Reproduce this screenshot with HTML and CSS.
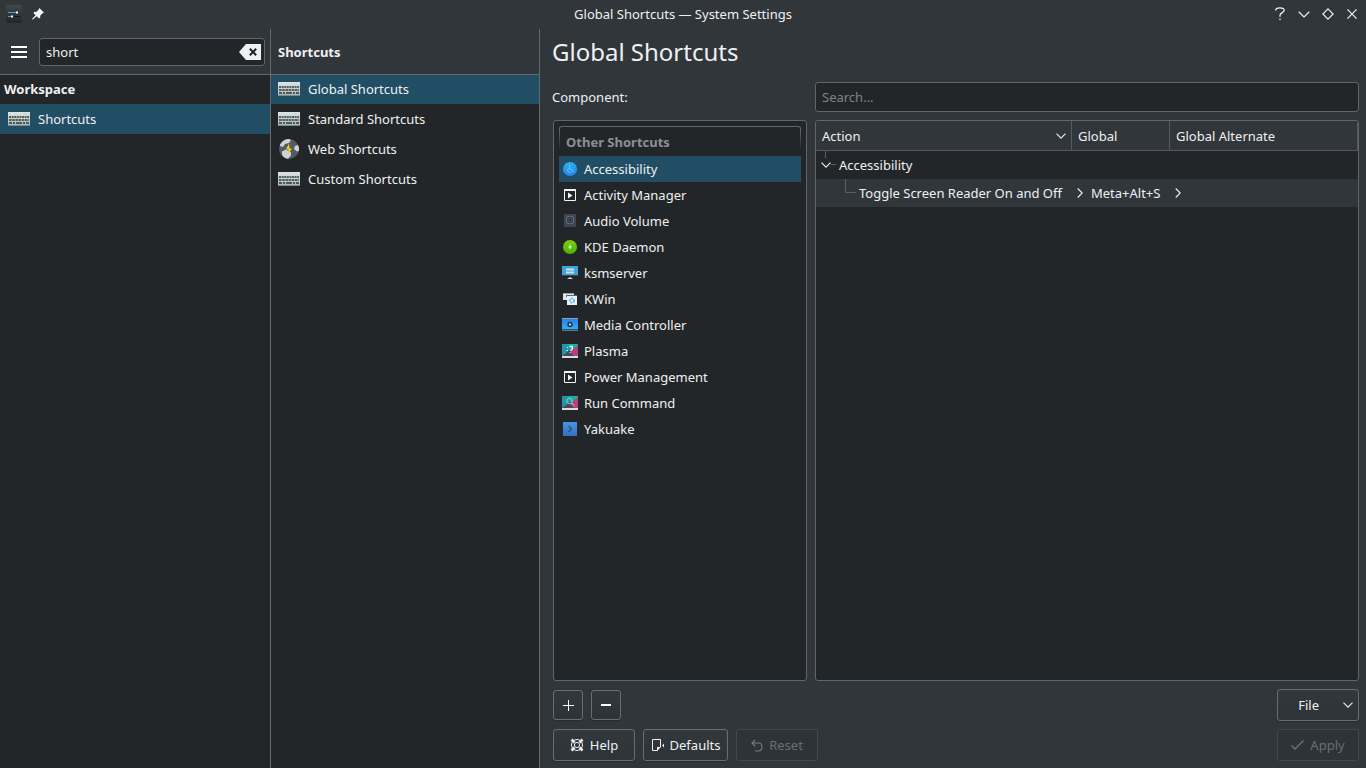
FILE: index.html
```html
<!DOCTYPE html>
<html lang="en">
<head>
<meta charset="utf-8">
<title>Global Shortcuts — System Settings</title>
<link rel="stylesheet" href="styles.css">
</head>
<body>
<svg class="defs" width="0" height="0">
  <defs>
    <linearGradient id="g-acc" x1="0" y1="0" x2="0" y2="1"><stop offset="0" stop-color="#2cb0f5"/><stop offset="1" stop-color="#2585ee"/></linearGradient>
    <linearGradient id="g-green" x1="0" y1="0" x2="0" y2="1"><stop offset="0" stop-color="#7ad10a"/><stop offset="1" stop-color="#4ab00c"/></linearGradient>
    <linearGradient id="g-blue" x1="0" y1="0" x2="0" y2="1"><stop offset="0" stop-color="#2a7df0"/><stop offset="1" stop-color="#22b6fa"/></linearGradient>
    <linearGradient id="g-yak" x1="0" y1="0" x2="0" y2="1"><stop offset="0" stop-color="#4896dc"/><stop offset="1" stop-color="#356fc0"/></linearGradient>
    <linearGradient id="g-key" x1="0" y1="0" x2="0" y2="1"><stop offset="0" stop-color="#dfe5e5"/><stop offset="1" stop-color="#aab3b3"/></linearGradient>
    <linearGradient id="g-app" x1="0" y1="0" x2="0" y2="1"><stop offset="0" stop-color="#42474c"/><stop offset="1" stop-color="#222529"/></linearGradient>
    <symbol id="keyboard" viewBox="0 0 22 22">
      <rect y="4" width="22" height="14" fill="url(#g-key)"/>
      <rect y="17" width="22" height="1" fill="#7c8989"/>
      <rect x="16" y="5" width="3" height="1" fill="#a5e6da"/>
      <path d="M1 9h20" stroke="#52615f" stroke-width="2" stroke-dasharray="2 .6"/>
      <path d="M1 12h20" stroke="#52615f" stroke-width="2" stroke-dasharray="2.600 .6"/>
      <path d="M1 15h3M5 15h2M8 15h6M15 15h2M18 15h3" stroke="#4c5b59" stroke-width="2"/>
    </symbol>
    <symbol id="chev-down" viewBox="0 0 10 6"><path d="M.5.7L5 5.200 9.500.7" fill="none" stroke="#eff0f1" stroke-width="1.100"/></symbol>
    <symbol id="chev-right" viewBox="0 0 6 10"><path d="M.7.5L5.200 5 .7 9.500" fill="none" stroke="#eff0f1" stroke-width="1.100"/></symbol>
    <symbol id="run" viewBox="0 0 16 16"><path d="M2.500 3v10.500h11V3" fill="none" stroke="#f2f3f3"/><path d="M2 2h12v2H2zM6 5.500l4.500 3L6 11.500z" fill="#f2f3f3"/></symbol>
    <symbol id="desktop" viewBox="0 0 16 16">
      <path d="M0 1h16L0 14z" fill="#2494a8"/><path d="M5 1h11v2l-6 5z" fill="#1fae98"/>
      <path d="M16 2v11H5l4-5z" fill="#b5407f"/><path d="M0 13l7-5 5 5z" fill="#454b52"/>
      <rect y="13" width="16" height="2" fill="#d9dcde"/>
    </symbol>
  </defs>
</svg>

<header class="titlebar">
  <svg class="app-icon" width="18" height="18" viewBox="0 0 18 18"><rect x="1" y="0" width="16" height="18" fill="url(#g-app)"/><path d="M3 7.500h8" stroke="#4aa0cb"/><path d="M3 11.500h4" stroke="#4aa0cb"/><path d="M9 11.500h6" stroke="#111418"/><rect x="11" y="6.500" width="2" height="2" fill="#fff"/><rect x="6" y="10.500" width="2" height="2" fill="#fff"/></svg>
  <svg class="pin" width="12" height="12" viewBox="0 0 12 12"><path d="M7.200 0L12 4.500 10.500 5.300 8.200 7.700 8.200 10 6.800 10.300 4.600 8.200 1 11.500 0 11.300.5 10.400 3.600 7.200 1.600 5.200 2 3.800 4.300 3.900 6.700 1.600z" fill="#f5f6f6"/></svg>
  <span class="window-title">Global Shortcuts — System Settings</span>
  <div class="window-controls">
    <svg width="10" height="14" viewBox="0 0 10 14"><path d="M.6 3.500C.6 1.700 2 .8 4.800.8s4.400.8 4.400 2.500c0 2.200-4.200 2.500-4.200 5v1.500M5 11.600v1.600" fill="none" stroke="#eff0f1" stroke-width="1.200"/></svg>
    <svg width="12" height="7" viewBox="0 0 12 7"><path d="M.7.8L6 6 11.300.8" fill="none" stroke="#eff0f1" stroke-width="1.200"/></svg>
    <svg width="12" height="12" viewBox="0 0 12 12"><path d="M6 .9L11.100 6 6 11.100.9 6z" fill="none" stroke="#eff0f1" stroke-width="1.200"/></svg>
    <svg width="10" height="10" viewBox="0 0 10 10"><path d="M.4.400l9.200 9.200M9.600.4L.4 9.600" stroke="#eff0f1" stroke-width="1.200"/></svg>
  </div>
</header>

<div class="body">
  <aside class="categories">
    <div class="side-head">
      <svg width="16" height="12" viewBox="0 0 16 12"><path d="M0 1h16M0 6h16M0 11h16" stroke="#fff" stroke-width="2"/></svg>
      <div class="field filter">short
        <svg width="22" height="16" viewBox="0 0 22 16"><path d="M7 0h15v16H7L0 8z" fill="#eff0f1"/><path d="M10.800 4.800l6.400 6.400M17.200 4.800l-6.400 6.400" stroke="#232629" stroke-width="2"/></svg>
      </div>
    </div>
    <div class="row first bold">Workspace</div>
    <div class="row item selected"><svg width="22" height="22"><use href="#keyboard"/></svg>Shortcuts</div>
  </aside>
  <aside class="modules">
    <div class="side-head bold">Shortcuts</div>
    <div class="row first item selected"><svg width="22" height="22"><use href="#keyboard"/></svg>Global Shortcuts</div>
    <div class="row item"><svg width="22" height="22"><use href="#keyboard"/></svg>Standard Shortcuts</div>
    <div class="row item"><svg width="22" height="22" viewBox="0 0 22 22"><circle cx="11" cy="11" r="10" fill="#535c64"/><path d="M2 6.500C4 3 7 1 11 1l2 1-2 3-4 1-2 3-3-1zM17 8l3-1c1 2 1.300 4 .8 6L19 13.500 16 11zM4 13.500l4-2 5 3v3l-3 3.300c-4-.3-6-3.300-6-5z" fill="#cfd1d3"/><path d="M11 5.500L8 11.500h2.500L10 16.500 14 10.500h-2.500z" fill="#f8d024"/></svg>Web Shortcuts</div>
    <div class="row item"><svg width="22" height="22"><use href="#keyboard"/></svg>Custom Shortcuts</div>
  </aside>

  <main class="content">
    <h1>Global Shortcuts</h1>
    <div class="search-row">
      <span class="label">Component:</span>
      <div class="field search">Search...</div>
    </div>
    <div class="panes">
      <section class="pane components">
        <div class="group-title">Other Shortcuts</div>
        <div class="comp selected"><svg width="16" height="16" viewBox="0 0 16 16"><circle cx="8" cy="8" r="7" fill="url(#g-acc)"/><path d="M7.500 4v4.500H10l1.300 2.500M6.500 7.300a2.300 2.300 0 1 0 2.800 3.700" fill="none" stroke="#78c6fa" stroke-width=".9"/></svg>Accessibility</div>
        <div class="comp"><svg width="16" height="16"><use href="#run"/></svg>Activity Manager</div>
        <div class="comp"><svg width="16" height="16" viewBox="0 0 16 16"><rect x="2" y="1" width="12" height="13" fill="#3c4651"/><circle cx="8" cy="7" r="4" fill="#343d49" stroke="#66707c"/><circle cx="8" cy="7" r="1.700" fill="#252d37" stroke="#56616c" stroke-width=".6"/></svg>Audio Volume</div>
        <div class="comp"><svg width="16" height="16" viewBox="0 0 16 16"><circle cx="8" cy="8" r="7" fill="url(#g-green)"/><path d="M8.500 4.500L6.200 8.700h1.500L7.500 11.500l2.400-4.200H8.500z" fill="#e5f7d4"/></svg>KDE Daemon</div>
        <div class="comp"><svg width="16" height="16" viewBox="0 0 16 16"><rect y="1" width="16" height="9" fill="#3fa4dc"/><rect y="10" width="16" height="1" fill="#39454e"/><path d="M4 4.500h8M4 7.500h8" stroke="#c5dfec" stroke-width="2"/><path d="M5 14l3-2 3 2z" fill="#d8dadb"/></svg>ksmserver</div>
        <div class="comp"><svg width="16" height="16" viewBox="0 0 16 16"><path d="M1 2h11v7H1z" fill="#dfe7ea"/><path d="M1 2h11v1H1z" fill="#8b9fa8"/><path d="M4 4h11v2H4z" fill="#5a6873"/><path d="M5 5h10v9H5z" fill="#e7f2f7"/><circle cx="10" cy="9.500" r="2.200" fill="none" stroke="#58b5e8" stroke-width="1.600" stroke-dasharray="2 .8"/></svg>KWin</div>
        <div class="comp"><svg width="16" height="16" viewBox="0 0 16 16"><rect y="1" width="16" height="13" fill="#8fa8b8"/><rect y="2" width="16" height="10" fill="url(#g-blue)"/><rect y="12" width="16" height="1.500" fill="#354c5e"/><circle cx="8" cy="7.500" r="2.700" fill="#23384c"/><circle cx="8" cy="7.500" r="1.100" fill="#e4e9ec"/></svg>Media Controller</div>
        <div class="comp"><svg width="16" height="16" viewBox="0 0 16 16"><use href="#desktop"/><path d="M7.500 3.500h2.800v2.300L8.500 8" fill="none" stroke="#f2f5f5" stroke-width="1.300"/><path d="M5 4h1v1H5zM4.500 7h1.500v1H4.500zM7.500 9h1v1h-1z" fill="#f2f5f5"/></svg>Plasma</div>
        <div class="comp"><svg width="16" height="16"><use href="#run"/></svg>Power Management</div>
        <div class="comp"><svg width="16" height="16" viewBox="0 0 16 16"><use href="#desktop"/><circle cx="7.500" cy="6" r="2.700" fill="none" stroke="#85d3cc"/><path d="M9.500 8l2.500 2.500" stroke="#ddd"/></svg>Run Command</div>
        <div class="comp"><svg width="16" height="16" viewBox="0 0 16 16"><rect x="1" y="1" width="14" height="14" fill="url(#g-yak)"/><path d="M6.500 5l3 3-3 3" fill="none" stroke="#234c85" stroke-width="1.200"/></svg>Yakuake</div>
      </section>
      <section class="pane tree">
        <div class="thead">
          <div class="th action">Action<svg width="10" height="6"><use href="#chev-down"/></svg></div>
          <div class="th global">Global</div>
          <div class="th alternate">Global Alternate</div>
        </div>
        <div class="trow parent">
          <svg width="20" height="28" viewBox="0 0 20 28"><path d="M9.500 0v7M15 13.500h5" stroke="#5a5f63"/><path d="M5.500 11.700L10 16.200 14.500 11.700" fill="none" stroke="#eff0f1" stroke-width="1.100"/></svg>
          <span>Accessibility</span>
        </div>
        <div class="trow child">
          <svg width="11" height="28" viewBox="0 0 11 28"><path d="M.5 0v13.500H11" fill="none" stroke="#5a5f63"/></svg>
          <span class="name">Toggle Screen Reader On and Off</span>
          <svg width="6" height="10"><use href="#chev-right"/></svg>
          <span class="keys">Meta+Alt+S</span>
          <svg width="6" height="10"><use href="#chev-right"/></svg>
        </div>
      </section>
    </div>
    <div class="tools">
      <div class="btn square"><svg width="12" height="12" viewBox="0 0 12 12"><path d="M0 6.500h11M5.500 1v11" stroke="#fff"/></svg></div>
      <div class="btn square"><svg width="12" height="12" viewBox="0 0 12 12"><path d="M1 6h10" stroke="#fff" stroke-width="2"/></svg></div>
      <div class="btn file"><span>File</span><svg width="10" height="6"><use href="#chev-down"/></svg></div>
    </div>
    <div class="actions">
      <div class="btn help"><svg width="14" height="14" viewBox="0 0 14 14"><path d="M1.500 1.500l3 3M12.500 1.500l-3 3M1.500 12.500l3-3M12.500 12.500l-3-3" stroke="#eff0f1" stroke-width="2.600"/><circle cx="7" cy="7" r="5.500" fill="none" stroke="#eff0f1"/><circle cx="7" cy="7" r="2.600" fill="none" stroke="#eff0f1"/></svg>Help</div>
      <div class="btn defaults"><svg width="14" height="14" viewBox="0 0 14 14"><path d="M7 12.500H1.500v-11h8V9" fill="none" stroke="#eff0f1"/><path d="M6 13V9h4zM13 5.500v4L11 7.500z" fill="#eff0f1"/></svg>Defaults</div>
      <div class="btn reset disabled"><svg width="12" height="13" viewBox="0 0 12 13"><path d="M4.300.7L1 4l3.300 3.300M1 4h6.500C10 4 11 5.700 11 8s-1.500 4-4 4H4" fill="none" stroke="#787d81" stroke-width="1.100"/></svg>Reset</div>
      <div class="btn apply disabled"><svg width="13" height="10" viewBox="0 0 13 10"><path d="M.5 5.500L4 9 12.500.5" fill="none" stroke="#787d81" stroke-width="1.100"/></svg>Apply</div>
    </div>
  </main>
</div>
</body>
</html>
```

FILE: styles.css
```css
* { box-sizing: border-box; }
html, body { margin: 0; height: 100%; }
body {
  width: 1366px;
  height: 768px;
  overflow: hidden;
  display: flex;
  flex-direction: column;
  background: #31363b;
  color: #eff0f1;
  font: 13px/18px "Noto Sans", sans-serif;
  white-space: nowrap;
}
svg { display: block; flex: none; }
.defs { position: absolute; }
.bold { font-weight: 700; }

.titlebar {
  height: 29px;
  flex: none;
  display: flex;
  align-items: center;
  padding: 0 9px 1px 5px;
}
.pin { margin-left: 9px; }
.window-title { flex: 1; text-align: center; padding-left: 47px; }
.window-controls { display: flex; align-items: center; gap: 12px; }
.window-controls svg:first-child { margin-right: 1px; }
.window-controls svg:last-child { margin-left: 1px; }

.body { flex: 1; display: flex; min-height: 0; }
.categories, .modules {
  background: #232629;
  border-right: 1px solid #66696c;
}
.categories { width: 271px; }
.modules { width: 269px; }
.side-head {
  height: 46px;
  background: #31363b;
  border-bottom: 1px solid #66696c;
  display: flex;
  align-items: center;
}
.categories .side-head { padding: 0 5px 0 11px; gap: 12px; }
.modules .side-head { padding-left: 7px; }
.field {
  background: #232629;
  border: 1px solid #616569;
  border-radius: 3px;
  display: flex;
  align-items: center;
}
.filter { flex: 1; height: 28px; padding: 0 3px 0 6px; justify-content: space-between; }
.row { height: 30px; display: flex; align-items: center; }
.row.first { height: 29px; padding: 0 0 1px 4px; }
.row.item { padding-left: 8px; gap: 8px; }
.modules .row.item { padding-left: 7px; }
.selected { background: #224e65; }

.content { flex: 1; padding: 0 7px 0 13px; }
h1 {
  margin: 0 0 0 -1px;
  height: 53px;
  font-size: 24px;
  font-weight: 400;
  line-height: 46px;
}
.search-row { display: flex; height: 30px; align-items: center; }
.label { width: 263px; margin-left: -1px; }
.search { flex: 1; height: 30px; padding-left: 6px; color: #7f8386; }
.panes { display: flex; gap: 8px; margin-top: 8px; height: 561px; }
.pane { background: #232629; border: 1px solid #616569; border-radius: 3px; }
.components { width: 254px; padding: 5px; }
.group-title {
  height: 30px;
  padding: 6px 0 0 6px;
  line-height: 18px;
  font-weight: 700;
  color: #8d9092;
  border: 1px solid transparent;
  border-radius: 3px 3px 0 0;
  background:
    linear-gradient(#232629, #232629) padding-box,
    linear-gradient(#616569, #616569 15%, #232629 80%) border-box;
}
.comp { height: 26px; display: flex; align-items: center; gap: 6px; padding-left: 3px; }

.tree { flex: 1; overflow: hidden; }
.thead { height: 30px; display: flex; background: #31363b; border-bottom: 1px solid #565a5e; }
.th { display: flex; align-items: center; padding-left: 6px; border-right: 1px solid #565a5e; }
.th.action { width: 256px; justify-content: space-between; padding-right: 5px; }
.th.global { width: 98px; }
.th.alternate { flex: 1; }
.trow { height: 28px; display: flex; align-items: center; }
.trow.parent { gap: 3px; }
.trow.child { background: #31363b; padding-left: 29px; }
.name { margin: 0 15px 0 3px; }
.keys { margin: 0 15px 0 8px; }

.tools, .actions { display: flex; gap: 8px; }
.tools { margin-top: 8px; height: 32px; align-items: center; }
.actions { margin-top: 8px; }
.btn {
  height: 32px;
  border: 1px solid #6a6e71;
  border-radius: 3px;
  background: linear-gradient(#33383d, #2e3338);
  box-shadow: 0 1px 1px #282c30;
  display: flex;
  align-items: center;
  justify-content: center;
  gap: 6px;
}
.square { width: 30px; height: 30px; padding-right: 0; }
.square:first-child { padding-left: 1px; }
.file { width: 82px; margin-left: auto; justify-content: flex-end; padding-right: 5px; gap: 24px; }
.help { width: 82px; }
.defaults { width: 85px; gap: 5px; }
.reset { width: 82px; }
.apply { width: 82px; margin-left: auto; }
.disabled { color: #696e72; border-color: #43484c; box-shadow: none; background: #2e3338; }
```
